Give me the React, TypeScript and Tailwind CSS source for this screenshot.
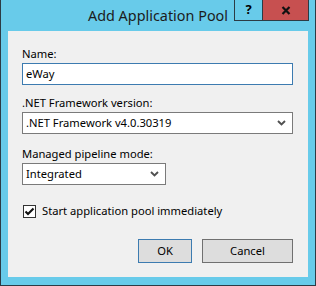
import React from "react";

const font = { fontFamily: '"Segoe UI", "Noto Sans", "Open Sans", sans-serif' };

const Chevron = () => (
  <svg width="9" height="6" viewBox="0 0 9 6" className="shrink-0">
    <polyline points="1,1 4.5,4.5 8,1" fill="none" stroke="#505050" strokeWidth="1.9" />
  </svg>
);

const Select = ({ value, className }: { value: string; className: string }) => (
  <div className={`h-[22px] bg-white border border-[#7a7a7a] flex items-center pl-[3px] pr-[6px] ${className}`}>
    <span className="flex-1 leading-none text-black">{value}</span>
    <Chevron />
  </div>
);

export default function App() {
  return (
    <div
      className="w-[316px] h-[286px] bg-[#68cbea] border-x border-b border-[#2c3b45] flex flex-col"
      style={font}
    >
      {/* Title bar */}
      <div className="relative h-[30px] shrink-0 flex items-center justify-center">
        <span className="text-[14.4px] text-[#1c1c1c] mt-[1px]">Add Application Pool</span>
        <div className="absolute right-[6px] top-0 flex">
          <div className="w-[29px] h-[21px] border border-[#2c3b45] border-t-0 flex items-center justify-center text-[13px] font-bold text-black">
            ?
          </div>
          <div className="w-[46px] h-[21px] bg-[#c75050] border border-l-0 border-t-0 border-[#2c3b45] flex items-center justify-center">
            <svg width="10" height="9" viewBox="0 0 10 9">
              <path d="M1.5 1 L8.5 8 M8.5 1 L1.5 8" stroke="#111" strokeWidth="2.2" />
            </svg>
          </div>
        </div>
      </div>

      {/* Client area */}
      <div className="mx-[7px] mt-[1px] h-[246px] bg-[#f0f0f0] pl-[14px] pr-[15px] pt-[15px] text-[11.2px] text-black flex flex-col">
        <div className="leading-[16px]">Name:</div>
        <div className="mt-[1px] h-[22px] bg-white border border-[#3c7bb0] flex items-center pl-[3px]">eWay</div>

        <div className="mt-[10px] leading-[16px]">.NET Framework version:</div>
        <Select value=".NET Framework v4.0.30319" className="mt-[1px] w-full" />

        <div className="mt-[12px] leading-[16px]">Managed pipeline mode:</div>
        <Select value="Integrated" className="mt-[1px] w-[144px]" />

        <div className="mt-[18px] flex items-center gap-[6px] ml-[1px]">
          <div className="w-[13px] h-[13px] bg-white border border-[#333] flex items-center justify-center">
            <svg width="11" height="9" viewBox="0 0 11 9">
              <polyline points="1.5,4.5 4,7 9.5,1.5" fill="none" stroke="#111" strokeWidth="2.1" />
            </svg>
          </div>
          <span className="leading-[16px]">Start application pool immediately</span>
        </div>

        <div className="mt-[20px] flex justify-end gap-[10px]">
          <button className="w-[54px] h-[24px] bg-[#dddddd] border border-[#3c7bb0]">OK</button>
          <button className="w-[91px] h-[24px] bg-[#dddddd] border border-[#707070]">Cancel</button>
        </div>
      </div>
    </div>
  );
}
